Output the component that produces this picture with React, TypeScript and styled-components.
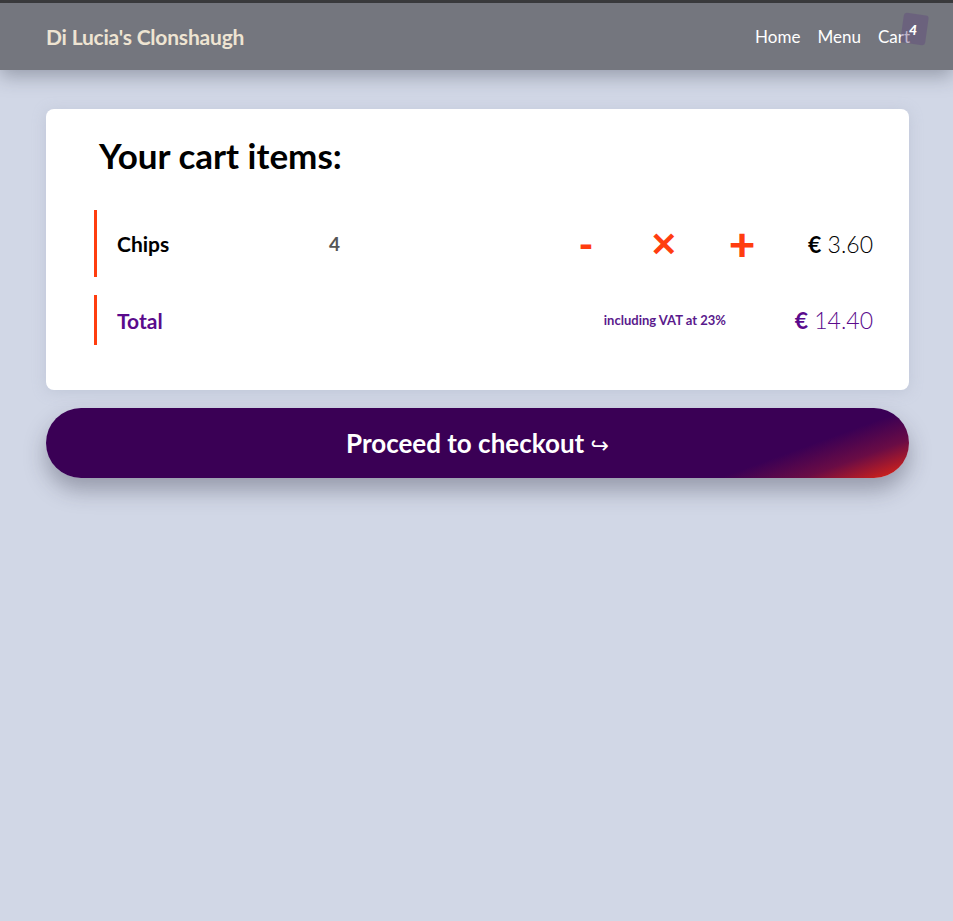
import React from 'react'
import styled, { createGlobalStyle } from 'styled-components'

const GlobalStyle = createGlobalStyle`
  html, body {
    margin: 0;
    padding: 0;
    background: #d1d7e6;
    font-family: Lato, 'Noto Sans', sans-serif;
  }
`

const items = [{ name: 'Chips', qty: 4, price: 3.6 }]

const App = () => {
  const total = items.reduce((sum, item) => sum + item.qty * item.price, 0)
  const cartCount = items.reduce((sum, item) => sum + item.qty, 0)
  return (
    <Page>
      <GlobalStyle />
      <Navbar>
        <Brand>Di Lucia's Clonshaugh</Brand>
        <Links>
          <NavLink>Home</NavLink>
          <NavLink>Menu</NavLink>
          <CartLink>
            Cart
            <Badge />
            <Count>{cartCount}</Count>
          </CartLink>
        </Links>
      </Navbar>
      <Main>
        <Card>
          <Heading>Your cart items:</Heading>
          <Rows>
            {items.map((item) => (
              <ItemRow key={item.name}>
                <Name>{item.name}</Name>
                <Qty>{item.qty}</Qty>
                <Action $size={40}>-</Action>
                <Action $size={33}>✕</Action>
                <Action $size={46}>+</Action>
                <Price>
                  <Euro>€</Euro> {item.price.toFixed(2)}
                </Price>
              </ItemRow>
            ))}
            <TotalRow>
              <TotalLabel>Total</TotalLabel>
              <Vat>including VAT at 23%</Vat>
              <TotalPrice>
                <Euro>€</Euro> {total.toFixed(2)}
              </TotalPrice>
            </TotalRow>
          </Rows>
        </Card>
        <Checkout>
          Proceed to checkout <Arrow>↪</Arrow>
        </Checkout>
      </Main>
    </Page>
  )
}

const Page = styled.div`
  min-height: 100vh;
  border-top: 3px solid #3b3b3d;
`

const Navbar = styled.nav`
  height: 67px;
  background: #74767e;
  box-shadow: 0 6px 18px rgba(40, 45, 60, 0.35);
  display: flex;
  align-items: center;
  justify-content: space-between;
  padding: 0 26px 0 46px;
`

const Brand = styled.div`
  color: #eee4d2;
  font-weight: 700;
  font-size: 21px;
  letter-spacing: -0.2px;
`

const Links = styled.div`
  display: flex;
  align-items: center;
  gap: 17px;
`

const NavLink = styled.span`
  color: #ffffff;
  font-size: 17px;
`

const CartLink = styled(NavLink)`
  position: relative;
  padding-right: 17px;
`

const Badge = styled.span`
  position: absolute;
  right: 0px;
  top: -12px;
  width: 25px;
  height: 30px;
  border-radius: 3px;
  background: rgba(95, 70, 125, 0.4);
  transform: rotate(8deg);
`

const Count = styled.span`
  position: absolute;
  right: 10px;
  top: -5px;
  color: #fff;
  font-weight: 900;
  font-size: 14px;
  font-style: italic;
`

const Main = styled.main`
  padding: 39px 44px 0 46px;
  display: flex;
  flex-direction: column;
  gap: 18px;
`

const Card = styled.section`
  background: #fff;
  border-radius: 8px;
  box-shadow: 0 2px 14px rgba(160, 170, 190, 0.35);
  padding: 24px 36px 45px 48px;
`

const Heading = styled.h2`
  margin: 0 0 33px 5px;
  font-size: 35px;
  font-weight: 700;
  color: #000;
  line-height: 44px;
`

const Rows = styled.div`
  display: flex;
  flex-direction: column;
  gap: 18px;
`

const ItemRow = styled.div`
  display: grid;
  grid-template-columns: 212px 1fr 78px 78px 78px 92px;
  align-items: center;
  height: 67px;
  border-left: 3px solid #ff3d0f;
  padding-left: 20px;
`

const Name = styled.span`
  font-size: 21px;
  font-weight: 700;
  color: #000;
`

const Qty = styled.span`
  font-size: 19px;
  font-weight: 700;
  color: #555;
`

const Action = styled.span<{ $size: number }>`
  text-align: center;
  color: #ff3d0f;
  font-weight: 900;
  font-size: ${({ $size }) => $size}px;
  line-height: 1;
`

const Price = styled.span`
  text-align: right;
  font-size: 23px;
  font-weight: 300;
  color: #000;
`

const Euro = styled.b`
  font-weight: 700;
`

const TotalRow = styled.div`
  display: grid;
  grid-template-columns: 212px 1fr 147px;
  align-items: center;
  height: 50px;
  border-left: 3px solid #ff3d0f;
  padding-left: 20px;
  color: #5a0a8c;
`

const TotalLabel = styled.span`
  font-size: 21px;
  font-weight: 700;
`

const Vat = styled.span`
  text-align: right;
  font-size: 13px;
  font-weight: 700;
  color: #5a1a8c;
`

const TotalPrice = styled.span`
  text-align: right;
  font-size: 23px;
  font-weight: 300;
`

const Checkout = styled.button`
  height: 70px;
  border: none;
  border-radius: 35px;
  background: linear-gradient(160deg, #3a0055 82%, #6a0c45 90%, #ea280f 100%);
  box-shadow: 0 12px 22px rgba(40, 40, 60, 0.35);
  color: #fff;
  font-family: inherit;
  font-size: 26px;
  font-weight: 700;
  cursor: pointer;
`

const Arrow = styled.span`
  font-weight: 400;
  font-family: 'DejaVu Sans', sans-serif;
  font-size: 22px;
`

export default App
